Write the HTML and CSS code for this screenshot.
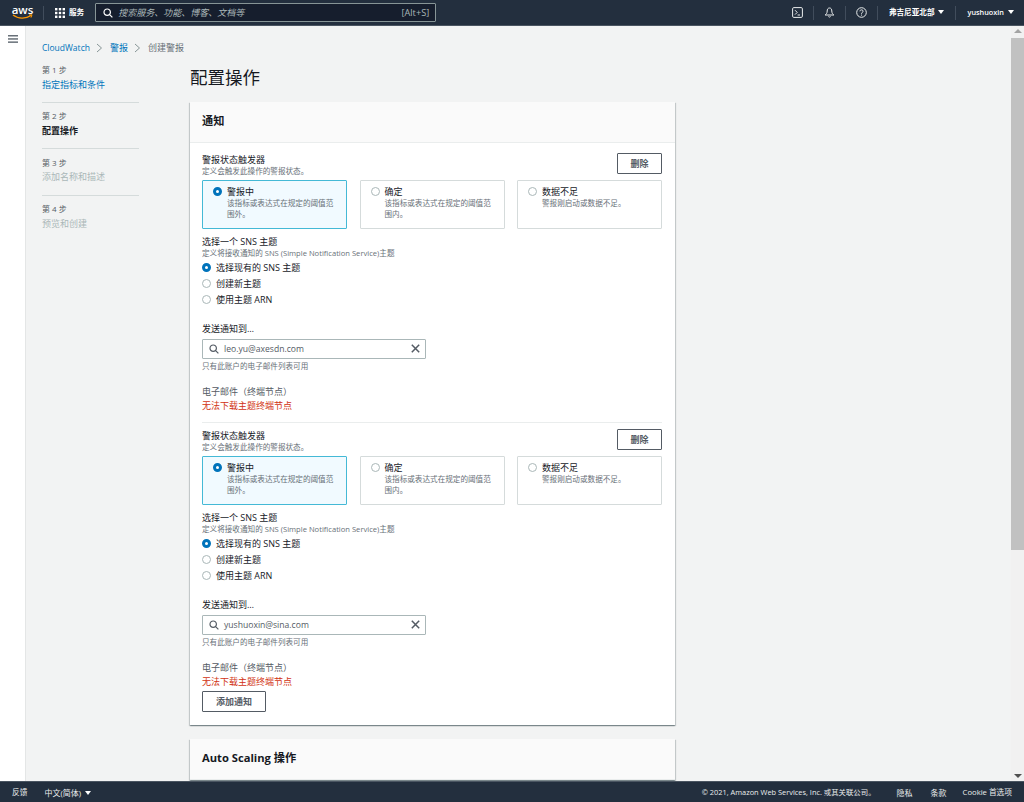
FILE: index.html
```html
<!DOCTYPE html>
<html lang="zh-CN">
<head>
<meta charset="utf-8">
<title>创建警报</title>
<link rel="stylesheet" href="styles.css">
</head>
<body>
<header class="topbar">
  <div class="aws-logo">
    <span class="aws-word">aws</span>
    <svg class="aws-smile" width="21" height="6" viewBox="0 0 21 6"><path d="M1 1C6 5 14 5 19 1.6" fill="none" stroke="#f90" stroke-width="1.2"/><path d="M17 1L20 .8 19 3.6" fill="none" stroke="#f90" stroke-width="1"/></svg>
  </div>
  <span class="tsep first"></span>
  <svg class="grid-icon" width="10" height="10" viewBox="0 0 10 10" fill="#fff"><rect width="2.4" height="2.4"/><rect x="3.8" width="2.4" height="2.4"/><rect x="7.6" width="2.4" height="2.4"/><rect y="3.8" width="2.4" height="2.4"/><rect x="3.8" y="3.8" width="2.4" height="2.4"/><rect x="7.6" y="3.8" width="2.4" height="2.4"/><rect y="7.6" width="2.4" height="2.4"/><rect x="3.8" y="7.6" width="2.4" height="2.4"/><rect x="7.6" y="7.6" width="2.4" height="2.4"/></svg>
  <span class="services">服务</span>
  <div class="searchbox">
    <svg width="10" height="10" viewBox="0 0 10 10" fill="none" stroke="#fff" stroke-width="1.2"><circle cx="4.2" cy="4.2" r="3.2"/><path d="M6.6 6.6L9.4 9.4"/></svg>
    <span class="search-ph">搜索服务、功能、博客、文档等</span>
    <span class="search-key">[Alt+S]</span>
  </div>
  <div class="top-right">
    <svg class="ticon" width="11" height="11" viewBox="0 0 11 11" fill="none" stroke="#eaeded" stroke-width="1"><rect x=".6" y=".6" width="9.8" height="9.8" rx="1.2"/><path d="M3 3.2L5.2 5.4 3 7.6M5.6 8H8"/></svg>
    <span class="tsep"></span>
    <svg class="ticon" width="11" height="11" viewBox="0 0 11 11" fill="none" stroke="#eaeded" stroke-width="1"><path d="M5.5 1C3.8 1 3.2 2.4 3.2 4 3.2 6 2.4 7 1.2 8H9.8C8.6 7 7.8 6 7.8 4 7.8 2.4 7.2 1 5.5 1ZM4.4 9.4C4.8 10.3 6.2 10.3 6.6 9.4"/></svg>
    <span class="tsep"></span>
    <svg class="ticon" width="11" height="11" viewBox="0 0 11 11" fill="none" stroke="#eaeded" stroke-width="1"><circle cx="5.5" cy="5.5" r="4.8"/><path d="M3.9 4.3C3.9 2.4 7.1 2.4 7.1 4.2 7.1 5.3 5.5 5.4 5.5 6.8M5.5 7.6V8.6"/></svg>
    <span class="tsep"></span>
    <span class="tmenu region">弗吉尼亚北部<i class="caret"></i></span>
    <span class="tsep"></span>
    <span class="tmenu user">yushuoxin<i class="caret"></i></span>
  </div>
</header>

<div class="workspace">
  <aside class="rail">
    <svg width="10" height="8" viewBox="0 0 10 8" fill="#687078"><rect width="10" height="1.5"/><rect y="3.2" width="10" height="1.5"/><rect y="6.4" width="10" height="1.5"/></svg>
  </aside>
  <main class="content">
    <nav class="crumbs">
      <a class="crumb-root">CloudWatch</a>
      <svg width="7" height="10" viewBox="0 0 7 10" fill="none" stroke="#879596"><path d="M1 1L5.5 5 1 9"/></svg>
      <a>警报</a>
      <svg width="7" height="10" viewBox="0 0 7 10" fill="none" stroke="#879596"><path d="M1 1L5.5 5 1 9"/></svg>
      <span>创建警报</span>
    </nav>
    <div class="columns">
      <ol class="steps">
        <li class="step"><small>第 1 步</small><a>指定指标和条件</a></li>
        <li class="step"><small>第 2 步</small><b>配置操作</b></li>
        <li class="step"><small>第 3 步</small><span>添加名称和描述</span></li>
        <li class="step"><small>第 4 步</small><span>预览和创建</span></li>
      </ol>
      <div class="form">
        <h1>配置操作</h1>
        <section class="card">
          <h2 class="card-head">通知</h2>
          <div class="card-body">
            <div class="block">
              <div class="trigger-head">
                <div><div class="label">警报状态触发器</div><div class="desc">定义会触发此操作的警报状态。</div></div>
                <button class="btn">删除</button>
              </div>
              <div class="tiles">
                <div class="tile on"><i class="radio on"></i><div><div class="tile-t">警报中</div><div class="desc">该指标或表达式在规定的阈值范围外。</div></div></div>
                <div class="tile"><i class="radio"></i><div><div class="tile-t">确定</div><div class="desc">该指标或表达式在规定的阈值范围内。</div></div></div>
                <div class="tile"><i class="radio"></i><div><div class="tile-t">数据不足</div><div class="desc">警报刚启动或数据不足。</div></div></div>
              </div>
              <div class="label sns">选择一个 SNS 主题</div>
              <div class="desc">定义将接收通知的 SNS (Simple Notification Service)主题</div>
              <div class="radios">
                <div class="ropt"><i class="radio on"></i>选择现有的 SNS 主题</div>
                <div class="ropt"><i class="radio"></i>创建新主题</div>
                <div class="ropt"><i class="radio"></i>使用主题 ARN</div>
              </div>
              <div class="label send">发送通知到…</div>
              <div class="input">
                <svg width="10" height="10" viewBox="0 0 10 10" fill="none" stroke="#545b64" stroke-width="1.2"><circle cx="4.2" cy="4.2" r="3.2"/><path d="M6.6 6.6L9.4 9.4"/></svg>
                <span>leo.yu@axesdn.com</span>
                <svg class="clear" width="9" height="9" viewBox="0 0 9 9" fill="none" stroke="#545b64" stroke-width="1.5"><path d="M.8.8L8.2 8.2M8.2.8L.8 8.2"/></svg>
              </div>
              <div class="desc hint">只有此账户的电子邮件列表可用</div>
              <div class="label endpoint">电子邮件（终端节点）</div>
              <div class="error">无法下载主题终端节点</div>
            </div>
            <div class="block second">
              <div class="trigger-head">
                <div><div class="label">警报状态触发器</div><div class="desc">定义会触发此操作的警报状态。</div></div>
                <button class="btn">删除</button>
              </div>
              <div class="tiles">
                <div class="tile on"><i class="radio on"></i><div><div class="tile-t">警报中</div><div class="desc">该指标或表达式在规定的阈值范围外。</div></div></div>
                <div class="tile"><i class="radio"></i><div><div class="tile-t">确定</div><div class="desc">该指标或表达式在规定的阈值范围内。</div></div></div>
                <div class="tile"><i class="radio"></i><div><div class="tile-t">数据不足</div><div class="desc">警报刚启动或数据不足。</div></div></div>
              </div>
              <div class="label sns">选择一个 SNS 主题</div>
              <div class="desc">定义将接收通知的 SNS (Simple Notification Service)主题</div>
              <div class="radios">
                <div class="ropt"><i class="radio on"></i>选择现有的 SNS 主题</div>
                <div class="ropt"><i class="radio"></i>创建新主题</div>
                <div class="ropt"><i class="radio"></i>使用主题 ARN</div>
              </div>
              <div class="label send">发送通知到…</div>
              <div class="input">
                <svg width="10" height="10" viewBox="0 0 10 10" fill="none" stroke="#545b64" stroke-width="1.2"><circle cx="4.2" cy="4.2" r="3.2"/><path d="M6.6 6.6L9.4 9.4"/></svg>
                <span>yushuoxin@sina.com</span>
                <svg class="clear" width="9" height="9" viewBox="0 0 9 9" fill="none" stroke="#545b64" stroke-width="1.5"><path d="M.8.8L8.2 8.2M8.2.8L.8 8.2"/></svg>
              </div>
              <div class="desc hint">只有此账户的电子邮件列表可用</div>
              <div class="label endpoint">电子邮件（终端节点）</div>
              <div class="error">无法下载主题终端节点</div>
            </div>
            <button class="btn add">添加通知</button>
          </div>
        </section>
        <section class="card next">
          <h2 class="card-head">Auto Scaling 操作</h2>
        </section>
      </div>
    </div>
  </main>
  <div class="scrollbar">
    <i class="arrow up"></i>
    <div class="thumb"></div>
    <i class="arrow down"></i>
  </div>
</div>

<footer class="footer">
  <span class="f-feedback">反馈</span>
  <span class="f-lang">中文(简体)<i class="caret"></i></span>
  <span class="f-copy">© 2021, Amazon Web Services, Inc. 或其关联公司。</span>
  <span class="f-link f-priv">隐私</span>
  <span class="f-link f-terms">条款</span>
  <span class="f-link f-cookie">Cookie 首选项</span>
</footer>
</body>
</html>
```
FILE: styles.css
```css
* { box-sizing: border-box; }
html, body { margin: 0; height: 100%; }
body {
  display: flex; flex-direction: column; height: 802px; overflow: hidden;
  font-family: "Open Sans", "Noto Sans CJK SC", sans-serif;
  font-size: 9px; line-height: 13px; color: #16191f; background: #fff;
}
.topbar {
  height: 26px; flex: none; display: flex; align-items: center;
  background: #232f3e; color: #fff; border-bottom: 1px solid #4a5561;
  padding-left: 12px;
}
.aws-logo { width: 21px; height: 17px; display: flex; flex-direction: column; align-items: center; }
.aws-word { font: 600 11.5px/11px "Open Sans", sans-serif; }
.aws-smile { margin-top: -1px; }
.tsep { width: 1px; height: 14px; background: #414d5c; flex: none; }
.tsep.first { margin: 0 11px 0 10px; }
.services { font-size: 7.6px; margin: 0 11px 0 4px; font-weight: 600; }
.searchbox {
  width: 341px; height: 19px; display: flex; align-items: center;
  background: #161e2d; border: 1px solid #879596; border-radius: 1px; padding: 0 6px 0 7px;
}
.search-ph { margin-left: 5px; font-style: italic; color: #aab7b8; font-size: 9px; }
.search-key { margin-left: auto; color: #aab7b8; font-size: 9.2px; }
.top-right { margin-left: auto; display: flex; align-items: center; padding-right: 10px; }
.ticon { margin: 0 10px; }
.tmenu { font-size: 7.6px; font-weight: 600; white-space: nowrap; }
.region { margin: 0 11px; }
.user { margin-left: 11px; font-size: 7.3px; }
.caret {
  display: inline-block; margin-left: 4px; border: 3px solid transparent;
  border-top: 4px solid #fff; border-bottom: 0; vertical-align: 1px;
}
.workspace { flex: 1; display: flex; min-height: 0; }
.rail { width: 26px; flex: none; background: #fff; border-right: 1px solid #e4e6e6; padding: 9px 0 0 8px; }
.rail svg { display: block; }
.content { flex: 1; background: #f2f3f3; overflow: hidden; padding: 15px 0 0 16px; min-width: 0; }
.crumbs { display: flex; align-items: center; height: 13px; gap: 6.5px; color: #687078; }
.crumbs a, .step a { color: #0073bb; }
.crumbs .crumb-root { font-size: 8.5px; }
.columns { display: flex; gap: 51px; margin-top: 3px; }
.steps { list-style: none; margin: 0; padding: 0; width: 97px; flex: none; }
.step { display: flex; flex-direction: column; height: 46.5px; padding-top: 6.5px; border-top: 1px solid #d5dbdb; }
.step:first-child { border-top: 0; height: 44.5px; padding-top: 6px; }
.step small { font-size: 8px; line-height: 14px; color: #545b64; }
.step span, .step a, .step b { line-height: 14px; margin-top: .5px; }
.step span { color: #aab7b8; }
.step b { font-weight: 600; }
.form { width: 485px; flex: none; }
h1 { margin: 0; height: 45px; font-size: 17.5px; line-height: 26px; font-weight: 400; padding-top: 7px; }
.card { background: #fff; box-shadow: 0 1px 1px 0 rgba(0,28,36,.3), 1px 1px 1px 0 rgba(0,28,36,.15), -1px 1px 1px 0 rgba(0,28,36,.15); }
.card-head { margin: 0; height: 41px; padding: 0 13px 3px 12px; display: flex; align-items: center; background: #fafafa; border-bottom: 1px solid #eaeded; font-size: 11.2px; font-weight: 700; }
.card-body { padding: 10px 13px 13px 12px; }
.block.second { border-top: 1px solid #eaeded; margin-top: 9px; padding-top: 6px; }
.trigger-head { display: flex; justify-content: space-between; align-items: flex-start; height: 27px; }
.label { font-size: 9px; line-height: 13px; color: #16191f; }
.desc { font-size: 7.6px; line-height: 11px; color: #687078; }
.btn {
  font: 600 9px/13px "Open Sans", "Noto Sans CJK SC", sans-serif; color: #545b64;
  background: #fff; border: 1px solid #545b64; border-radius: 1px; height: 21px; width: 45px; padding: 0;
}
.trigger-head .btn { flex: none; }
.tiles { display: flex; justify-content: space-between; }
.tile { width: 145px; height: 49px; border: 1px solid #d5dbdb; border-radius: 1px; padding: 3.5px 10px 0 10px; display: flex; gap: 5px; }
.tile.on { background: #f1faff; border-color: #44b9d6; }
.tile-t { font-size: 9px; line-height: 13px; }
.radio { width: 9px; height: 9px; border-radius: 50%; border: 1px solid #aab7b8; background: #fff; flex: none; display: block; margin-top: 2px; }
.radio.on { border: 3px solid #0073bb; }
.sns { margin-top: 6px; }
.ropt { height: 16px; display: flex; align-items: center; gap: 5px; color: #16191f; }
.ropt .radio { margin-top: 0; }
.send { margin-top: 15px; }
.input {
  width: 224px; height: 20.5px; margin-top: 3.5px; display: flex; align-items: center;
  border: 1px solid #aab7b8; border-radius: 1px; padding: 0 5px 0 6px; color: #545b64; font-size: 8.6px;
}
.input span { margin-left: 5px; padding-top: 1px; }
.clear { margin-left: auto; }
.hint { margin-top: 2px; }
.endpoint { margin-top: 13px; color: #545b64; line-height: 14px; }
.error { color: #d13212; font-size: 9px; line-height: 14px; }
.btn.add { width: 64px; display: block; margin-top: 2px; }
.next { margin-top: 14px; }
.scrollbar { width: 13px; flex: none; background: #f1f1f1; display: flex; flex-direction: column; align-items: center; padding-top: 3px; }
.thumb { width: 13px; height: 512px; background: #c1c1c1; margin-top: 5px; }
.arrow { display: block; border: 4px solid transparent; width: 0; height: 0; }
.arrow.up { border-top: 0; border-bottom: 4px solid #a3a3a3; }
.arrow.down { border-bottom: 0; border-top: 4px solid #505050; margin-top: auto; margin-bottom: 3px; }
.footer {
  height: 21px; flex: none; display: flex; align-items: center; background: #232f3e;
  color: #eaeded; font-size: 7.7px; padding: 0 12px; border-top: 1px solid #4a5561;
}
.f-feedback { margin-right: 17px; }
.f-lang { font-size: 8px; }
.f-copy { margin-left: auto; font-size: 7.4px; }
.f-link { margin-left: 18px; }
.f-link.f-priv, .f-link.f-terms { font-size: 8px; }
.f-link.f-priv { margin-left: 21px; }
.f-link.f-cookie { margin-left: 16px; }
```
